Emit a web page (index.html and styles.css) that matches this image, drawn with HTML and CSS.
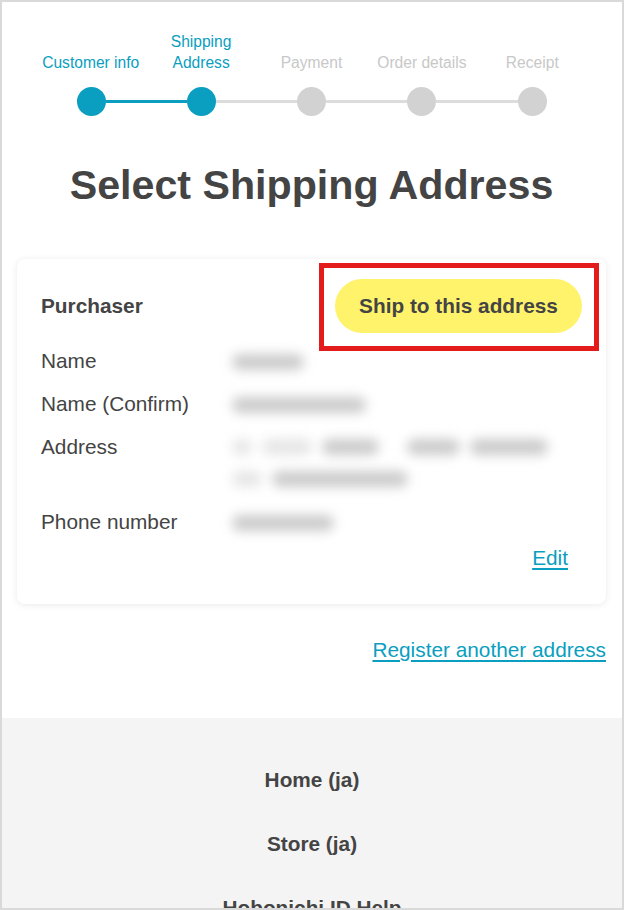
FILE: index.html
```html
<!DOCTYPE html>
<html lang="en">
<head>
<meta charset="utf-8">
<title>Select Shipping Address</title>
<link rel="stylesheet" href="styles.css">
</head>
<body>
<div class="frame">
  <main class="main">
    <nav class="stepper">
      <ol class="step-labels">
        <li class="done">Customer info</li>
        <li class="done">Shipping<br>Address</li>
        <li>Payment</li>
        <li>Order details</li>
        <li>Receipt</li>
      </ol>
      <div class="step-dots">
        <span class="dot on"></span>
        <span class="bar on"></span>
        <span class="dot on"></span>
        <span class="bar"></span>
        <span class="dot"></span>
        <span class="bar"></span>
        <span class="dot"></span>
        <span class="bar"></span>
        <span class="dot"></span>
      </div>
    </nav>

    <h1 class="title">Select Shipping Address</h1>

    <section class="card">
      <div class="card-head">
        <h2 class="card-title">Purchaser</h2>
        <div class="ship-wrap">
          <button class="ship-btn" type="button">Ship to this address</button>
          <span class="highlight"></span>
        </div>
      </div>
      <dl class="fields">
        <div class="field">
          <dt>Name</dt>
          <dd><span class="blur w70"></span></dd>
        </div>
        <div class="field">
          <dt>Name (Confirm)</dt>
          <dd><span class="blur w134"></span></dd>
        </div>
        <div class="field">
          <dt>Address</dt>
          <dd>
            <span class="blur-line"><span class="blur w20 light"></span><span class="blur w50 light gap-s"></span><span class="blur w57 gap-s"></span><span class="blur w53 gap-l"></span><span class="blur w77 gap-s"></span></span>
            <span class="blur-line"><span class="blur w28 light"></span><span class="blur w136 gap-s"></span></span>
          </dd>
        </div>
        <div class="field">
          <dt>Phone number</dt>
          <dd><span class="blur w100"></span></dd>
        </div>
      </dl>
      <div class="edit-row"><a class="link" href="#">Edit</a></div>
    </section>

    <div class="register-row"><a class="link" href="#">Register another address</a></div>
  </main>

  <footer class="footer">
    <a href="#">Home (ja)</a>
    <a href="#">Store (ja)</a>
    <a href="#">Hobonichi ID Help</a>
  </footer>
</div>
</body>
</html>
```
FILE: styles.css
```css
* { box-sizing: border-box; }

html, body {
  margin: 0;
  padding: 0;
  background: #ffffff;
}

body {
  font-family: "Liberation Sans", Arial, Helvetica, sans-serif;
  color: #444444;
  font-size: 20.8px;
}

.frame {
  width: 624px;
  height: 910px;
  border: 2px solid #d9d9d9;
  overflow: hidden;
  background: #ffffff;
}

.main {
  padding: 27px 16px 52px 15px;
}

/* Stepper */
.stepper {
  width: 552px;
  margin: 0 auto;
}

.step-labels {
  list-style: none;
  margin: 0;
  padding: 0;
  display: grid;
  grid-template-columns: repeat(5, 1fr);
  align-items: end;
  height: 44px;
  font-size: 15.6px;
  line-height: 21px;
  text-align: center;
  color: #c8c8c8;
}

.step-labels .done {
  color: #0a9ec0;
}

.step-dots {
  display: flex;
  align-items: center;
  padding: 0 41px;
  margin-top: 14px;
}

.dot {
  width: 29px;
  height: 29px;
  border-radius: 50%;
  background: #d2d2d2;
  flex: none;
}

.dot.on {
  background: #0a9ec0;
}

.bar {
  flex: 1;
  height: 3px;
  background: #dcdcdc;
}

.bar.on {
  background: #0a9ec0;
}

/* Title */
.title {
  margin: 44px 0 0;
  text-align: center;
  font-size: 41.2px;
  line-height: 50px;
  font-weight: 700;
  color: #444444;
}

/* Card */
.card {
  margin-top: 49px;
  background: #ffffff;
  border-radius: 8px;
  box-shadow: 0 1px 7px rgba(0, 0, 0, 0.09);
  padding: 20px 24px 30px 24px;
}

.card-head {
  display: flex;
  align-items: center;
  justify-content: space-between;
}

.card-title {
  margin: 0;
  font-size: 20.8px;
  font-weight: 700;
  color: #444444;
}

.ship-wrap {
  position: relative;
}

.ship-btn {
  display: block;
  width: 247px;
  height: 54px;
  border: none;
  border-radius: 27px;
  background: #fff36b;
  color: #444444;
  font-family: "Liberation Sans", Arial, Helvetica, sans-serif;
  font-size: 20.8px;
  font-weight: 700;
  padding: 0;
  cursor: pointer;
}

.highlight {
  position: absolute;
  top: -16px;
  left: -16px;
  right: -17px;
  bottom: -18px;
  border: 5px solid #e31b1b;
  pointer-events: none;
}

.fields {
  margin: 12px 0 0;
  display: flex;
  flex-direction: column;
  gap: 11px;
}

.field {
  display: flex;
  line-height: 32px;
}

.field dt {
  width: 191px;
  flex: none;
  color: #444444;
}

.field dd {
  margin: 0;
  display: flex;
  flex-direction: column;
}

.blur-line {
  display: flex;
  align-items: center;
  height: 32px;
}

.field dd > .blur {
  margin-top: 9px;
}

.blur {
  display: inline-block;
  height: 16px;
  border-radius: 8px;
  background: #cbcbcb;
  filter: blur(6px);
}

.blur.light {
  background: #e6e6e6;
}

.gap-s { margin-left: 10px; }
.gap-l { margin-left: 28px; }

.w20 { width: 20px; }
.w28 { width: 30px; }
.w50 { width: 50px; }
.w53 { width: 53px; }
.w57 { width: 57px; }
.w70 { width: 72px; }
.w77 { width: 78px; }
.w100 { width: 102px; }
.w134 { width: 134px; }
.w136 { width: 136px; }

.edit-row {
  display: flex;
  justify-content: flex-end;
  line-height: 32px;
  margin-top: 4px;
  padding-right: 14px;
}

.link {
  color: #0a9ec0;
  text-decoration: underline;
  text-underline-offset: 3px;
}

.register-row {
  display: flex;
  justify-content: flex-end;
  margin-top: 30px;
  line-height: 32px;
}

/* Footer */
.footer {
  background: #f4f4f4;
  padding-top: 46px;
  display: flex;
  flex-direction: column;
  align-items: center;
  gap: 32px;
}

.footer a {
  display: block;
  line-height: 32px;
  font-weight: 700;
  color: #444444;
  text-decoration: none;
}
```
